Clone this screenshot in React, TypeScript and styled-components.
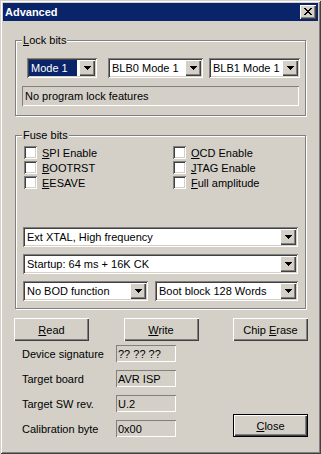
import React from 'react';
import styled, { createGlobalStyle } from 'styled-components';

const FACE = '#d4d0c8';
const TITLE = '#0a246a';

const GlobalStyle = createGlobalStyle`
  html, body {
    margin: 0;
    padding: 0;
    background: ${FACE};
  }
  body {
    font-family: "Liberation Sans", Arial, sans-serif;
    font-size: 11px;
    color: #000;
  }
  * {
    box-sizing: border-box;
  }
`;

const Window = styled.div`
  width: 321px;
  height: 454px;
  padding: 3px;
  background: ${FACE};
  box-shadow: inset 1px 1px ${FACE}, inset -1px -1px #404040, inset 2px 2px #fff, inset -2px -2px #808080;
  display: flex;
  flex-direction: column;
`;

const TitleBar = styled.div`
  height: 18px;
  background: ${TITLE};
  display: flex;
  align-items: center;
  justify-content: space-between;
  padding: 0 2px 0 2px;
`;

const TitleText = styled.span`
  color: #fff;
  font-weight: bold;
  font-size: 11px;
  line-height: 13px;
`;

const raised = `box-shadow: inset 1px 1px #fff, inset -1px -1px #404040, inset -2px -2px #808080;`;
const sunken = `box-shadow: inset 1px 1px #808080, inset -1px -1px #fff, inset 2px 2px #404040, inset -2px -2px ${FACE};`;

const CaptionButton = styled.div`
  width: 16px;
  height: 14px;
  background: ${FACE};
  ${raised}
  display: flex;
  align-items: center;
  justify-content: center;
  padding: 0 1px 1px 0;
`;

const Body = styled.div`
  flex: 1;
  display: flex;
  flex-direction: column;
  padding: 0 12px;
`;

const GroupBox = styled.div<{ $mt: number; $pb: number }>`
  margin-top: ${p => p.$mt}px;
  padding-bottom: ${p => p.$pb}px;
  border: 1px solid #808080;
  box-shadow: 1px 1px 0 #fff, inset 1px 1px 0 #fff;
  display: flex;
  flex-direction: column;
`;

const Caption = styled.span`
  align-self: flex-start;
  margin: -7px 0 0 6px;
  padding: 0 1px;
  line-height: 13px;
  background: ${FACE};
`;

const LockRow = styled.div`
  display: flex;
  margin: 11px 0 0 11px;
`;

const ComboBox = styled.div<{ $w?: number; $ml?: number }>`
  display: flex;
  height: 20px;
  width: ${p => (p.$w ? `${p.$w}px` : 'auto')};
  margin-left: ${p => p.$ml ?? 0}px;
  padding: 2px;
  background: #fff;
  ${sunken}
`;

const ComboText = styled.div<{ $selected?: boolean }>`
  flex: 1;
  display: flex;
  align-items: center;
  padding-left: 2px;
  white-space: nowrap;
  overflow: hidden;
  margin-right: ${p => (p.$selected ? 2 : 0)}px;
  background: ${p => (p.$selected ? TITLE : 'transparent')};
  color: ${p => (p.$selected ? '#fff' : '#000')};
`;

const DropButton = styled.div`
  width: 16px;
  background: ${FACE};
  ${raised}
  display: flex;
  align-items: center;
  justify-content: center;
  padding-bottom: 1px;
`;

const StaticField = styled.div`
  height: 20px;
  margin: 8px 6px 0 6px;
  padding-left: 3px;
  display: flex;
  align-items: center;
  box-shadow: inset 1px 1px #808080, inset -1px -1px #fff;
`;

const CheckGrid = styled.div`
  display: grid;
  grid-template-columns: 149px 1fr;
  margin: 3px 0 0 8px;
`;

const CheckItem = styled.label`
  display: flex;
  align-items: center;
  gap: 5px;
  height: 15px;
`;

const CheckBox = styled.span`
  width: 13px;
  height: 13px;
  background: #fff;
  ${sunken}
`;

const ComboStack = styled.div`
  display: flex;
  flex-direction: column;
  gap: 7px;
  margin: 37px 7px 0 7px;
`;

const ComboRow = styled.div`
  display: flex;
  gap: 7px;
`;

const ButtonRow = styled.div`
  display: flex;
  justify-content: space-between;
  margin: 9px -2px 0 -1px;
`;

const Button = styled.button<{ $default?: boolean }>`
  width: 75px;
  height: 23px;
  padding: 0;
  font: inherit;
  color: #000;
  background: ${FACE};
  border: ${p => (p.$default ? '1px solid #000' : 'none')};
  ${raised}
`;

const BottomArea = styled.div`
  display: flex;
  justify-content: space-between;
  align-items: flex-end;
  margin: 4px -2px 0 0;
`;

const InfoGrid = styled.div`
  display: grid;
  grid-template-columns: 94px 60px;
  row-gap: 8px;
  margin-left: 7px;
`;

const InfoLabel = styled.span`
  display: flex;
  align-items: center;
  white-space: nowrap;
`;

const InfoField = styled.div`
  height: 17px;
  padding-left: 2px;
  display: flex;
  align-items: center;
  white-space: nowrap;
  box-shadow: inset 1px 1px #808080, inset -1px -1px #fff;
`;

const CloseGlyph = () => (
  <svg width="8" height="7" viewBox="0 0 8 7" shapeRendering="crispEdges">
    <path
      fill="#000"
      d="M0 0h2v1H0z M6 0h2v1H6z M1 1h2v1H1z M5 1h2v1H5z M2 2h4v1H2z M3 3h2v1H3z M2 4h4v1H2z M1 5h2v1H1z M5 5h2v1H5z M0 6h2v1H0z M6 6h2v1H6z"
    />
  </svg>
);

const Arrow = () => (
  <svg width="7" height="4" viewBox="0 0 7 4" shapeRendering="crispEdges">
    <path fill="#000" d="M0 0h7v1H0z M1 1h5v1H1z M2 2h3v1H2z M3 3h1v1H3z" />
  </svg>
);

const Combo: React.FC<{ text: string; w?: number; ml?: number; selected?: boolean }> = ({ text, w, ml, selected }) => (
  <ComboBox $w={w} $ml={ml}>
    <ComboText $selected={selected}>{text}</ComboText>
    <DropButton>
      <Arrow />
    </DropButton>
  </ComboBox>
);

const Check: React.FC<{ k: string; rest: string }> = ({ k, rest }) => (
  <CheckItem>
    <CheckBox />
    <span>
      <u>{k}</u>
      {rest}
    </span>
  </CheckItem>
);

const info = [
  ['Device signature', '?? ?? ??'],
  ['Target board', 'AVR ISP'],
  ['Target SW rev.', 'U.2'],
  ['Calibration byte', '0x00'],
];

export default function App() {
  return (
    <>
      <GlobalStyle />
      <Window>
        <TitleBar>
          <TitleText>Advanced</TitleText>
          <CaptionButton>
            <CloseGlyph />
          </CaptionButton>
        </TitleBar>
        <Body>
          <GroupBox $mt={19} $pb={9}>
            <Caption>
              <u>L</u>ock bits
            </Caption>
            <LockRow>
              <Combo text="Mode 1" w={70} selected />
              <Combo text="BLB0 Mode 1" w={95} ml={11} />
              <Combo text="BLB1 Mode 1" w={91} ml={6} />
            </LockRow>
            <StaticField>No program lock features</StaticField>
          </GroupBox>

          <GroupBox $mt={19} $pb={7}>
            <Caption>Fuse bits</Caption>
            <CheckGrid>
              <Check k="S" rest="PI Enable" />
              <Check k="O" rest="CD Enable" />
              <Check k="B" rest="OOTRST" />
              <Check k="J" rest="TAG Enable" />
              <Check k="E" rest="ESAVE" />
              <Check k="F" rest="ull amplitude" />
            </CheckGrid>
            <ComboStack>
              <Combo text="Ext XTAL, High frequency" />
              <Combo text="Startup: 64 ms + 16K CK" />
              <ComboRow>
                <Combo text="No BOD function" w={125} />
                <Combo text="Boot block 128 Words" w={143} />
              </ComboRow>
            </ComboStack>
          </GroupBox>

          <ButtonRow>
            <Button>
              <u>R</u>ead
            </Button>
            <Button>
              <u>W</u>rite
            </Button>
            <Button>
              Chip <u>E</u>rase
            </Button>
          </ButtonRow>

          <BottomArea>
            <InfoGrid>
              {info.map(([label, value]) => (
                <React.Fragment key={label}>
                  <InfoLabel>{label}</InfoLabel>
                  <InfoField>{value}</InfoField>
                </React.Fragment>
              ))}
            </InfoGrid>
            <Button $default>
              <u>C</u>lose
            </Button>
          </BottomArea>
        </Body>
      </Window>
    </>
  );
}
